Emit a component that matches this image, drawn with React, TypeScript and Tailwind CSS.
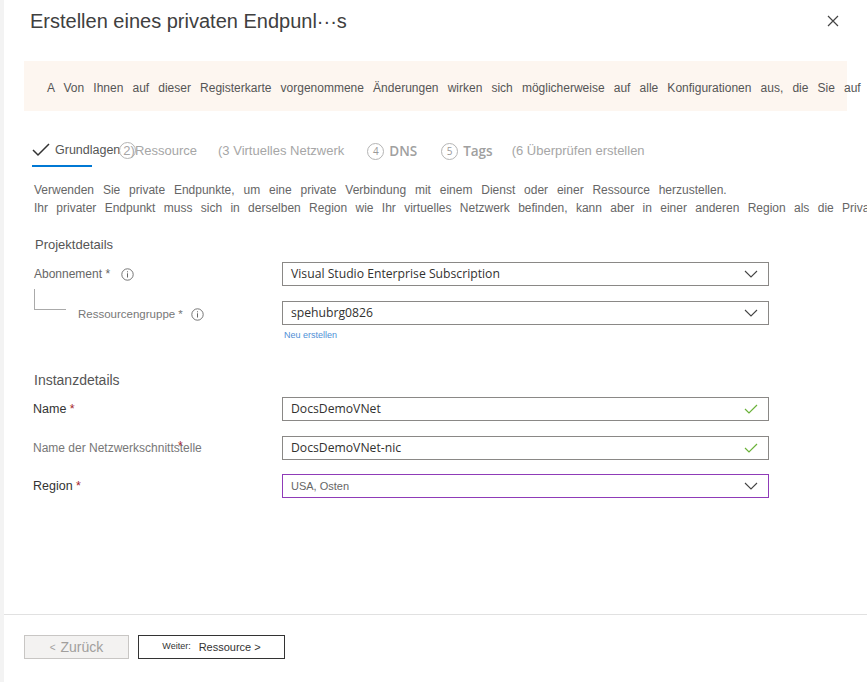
import React from "react";

const Chevron = () => (
  <svg width="14" height="8" viewBox="0 0 14 8" fill="none" className="shrink-0">
    <path d="M1 1l6 6 6-6" stroke="#444" strokeWidth="1.1" />
  </svg>
);

const Check = () => (
  <svg width="14" height="10" viewBox="0 0 14 10" fill="none" className="shrink-0">
    <path d="M1 5l4 4 8-8" stroke="#6bb23a" strokeWidth="1.2" />
  </svg>
);

const Info = () => (
  <svg width="13" height="13" viewBox="0 0 13 13" fill="none" className="shrink-0">
    <circle cx="6.5" cy="6.5" r="5.7" stroke="#666" strokeWidth="0.9" />
    <rect x="6" y="5.3" width="1" height="4.2" fill="#666" />
    <rect x="6" y="3.3" width="1" height="1" fill="#666" />
  </svg>
);

const Circle = ({ n }: { n: string }) => (
  <span className="inline-flex h-[17px] w-[17px] shrink-0 items-center justify-center rounded-full border border-[#b4b4b4] text-[10px] leading-none text-[#999]">
    {n}
  </span>
);

const Field = ({
  children,
  border = "border-[#8a8886]",
}: {
  children: React.ReactNode;
  border?: string;
}) => (
  <div className={`flex h-[24px] w-[487px] items-center justify-between border ${border} pl-[8px] pr-[10px]`}>
    {children}
  </div>
);

export default function App() {
  const sans = { fontFamily: '"Liberation Sans", Arial, sans-serif' };
  const seg = { fontFamily: '"Open Sans", "Noto Sans", sans-serif' };
  return (
    <div className="flex h-[682px] w-[867px] overflow-hidden bg-white" style={sans}>
      <div className="w-[4px] shrink-0 bg-[#f3f3f3]" />
      <div className="flex min-w-0 flex-1 flex-col">
        {/* header */}
        <div className="flex h-[42px] items-center justify-between pl-[26px] pr-[28px]">
          <h1 className="text-[20px] leading-none text-[#404040]">Erstellen eines privaten Endpunl···s</h1>
          <svg width="12" height="12" viewBox="0 0 12 12" fill="none">
            <path d="M1 1l10 10M11 1L1 11" stroke="#444" strokeWidth="1.2" />
          </svg>
        </div>

        {/* banner */}
        <div className="ml-[20px] mt-[19px] flex h-[50px] w-[823px] items-center overflow-visible bg-[#fdf6f0] pl-[23px] pt-[3px]">
          <p className="whitespace-nowrap text-[12px] text-[#555] [word-spacing:5.8px]">
            A Von Ihnen auf dieser Registerkarte vorgenommene Änderungen wirken sich möglicherweise auf alle Konfigurationen aus, die Sie auf
          </p>
        </div>

        {/* tabs */}
        <div className="mt-[30px] flex h-[25px] items-start pl-[28px] text-[13px] text-[#a6a6a6]">
          <div className="flex flex-col">
            <div className="flex items-center">
              <svg width="18" height="14" viewBox="0 0 18 14" fill="none" className="mr-[5px]">
                <path d="M1 7l5 5L17 1" stroke="#333" strokeWidth="1.5" />
              </svg>
              <span className="text-[12.5px] text-[#555]">Grundlagen</span>
            </div>
            <div className="mt-[5px] h-[2px] w-[60px] bg-[#0078d4]" />
          </div>
          <div className="-ml-[1px] flex items-center">
            <Circle n="" />
            <span className="-ml-[13px]">2)Ressource</span>
          </div>
          <span className="ml-[21px]">(3 Virtuelles Netzwerk</span>
          <div className="ml-[23px] flex items-center gap-[5px]" style={seg}>
            <Circle n="4" />
            <span className="text-[13.5px] font-semibold text-[#a0a0a0]">DNS</span>
          </div>
          <div className="ml-[24px] flex items-center gap-[5px]" style={seg}>
            <Circle n="5" />
            <span className="text-[13.5px] font-semibold text-[#a0a0a0]">Tags</span>
          </div>
          <span className="ml-[19px]">(6 Überprüfen erstellen</span>
        </div>

        {/* description */}
        <div className="mt-[15px] whitespace-nowrap pl-[30px] text-[12px] leading-[18px] text-[#666]">
          <p className="[word-spacing:5.5px]">Verwenden Sie private Endpunkte, um eine private Verbindung mit einem Dienst oder einer Ressource herzustellen.</p>
          <p className="[word-spacing:5px]">Ihr privater Endpunkt muss sich in derselben Region wie Ihr virtuelles Netzwerk befinden, kann aber in einer anderen Region als die Private</p>
        </div>

        {/* Projektdetails */}
        <div className="mt-[20px] pl-[31px] text-[13px] leading-[16px] text-[#555]">Projektdetails</div>

        <div className="mt-[9px] flex items-center pl-[30px]">
          <div className="flex w-[248px] items-center gap-[11px] text-[12px] text-[#666]">
            <span>Abonnement *</span>
            <Info />
          </div>
          <Field>
            <span className="text-[12.2px] text-[#323130]" style={seg}>Visual Studio Enterprise Subscription</span>
            <Chevron />
          </Field>
        </div>

        <div className="mt-[15px] flex items-start pl-[30px]">
          <div className="flex w-[248px]">
            <div className="-mt-[12px] h-[21px] w-[32px] border-b border-l border-[#aaa]" />
            <div className="ml-[12px] mt-[5px] flex items-center gap-[8px] text-[11.5px] text-[#777]">
              <span>Ressourcengruppe *</span>
              <Info />
            </div>
          </div>
          <div className="flex flex-col">
            <Field>
              <span className="text-[12.2px] text-[#323130]" style={seg}>spehubrg0826</span>
              <Chevron />
            </Field>
            <span className="mt-[3px] pl-[2px] text-[9px] leading-[14px] text-[#4f8fd6]">Neu erstellen</span>
          </div>
        </div>

        {/* Instanzdetails */}
        <div className="mt-[30px] pl-[30px] text-[14px] leading-[16px] text-[#555]">Instanzdetails</div>

        <div className="mt-[9px] flex items-center pl-[29px]">
          <div className="w-[249px] text-[12.5px] text-[#333]">
            Name <span className="text-[#a4262c]">*</span>
          </div>
          <Field>
            <span className="text-[12.2px] text-[#323130]" style={seg}>DocsDemoVNet</span>
            <Check />
          </Field>
        </div>

        <div className="mt-[15px] flex items-center pl-[29px]">
          <div className="relative w-[249px] text-[12px] text-[#777]">
            Name der Netzwerkschnittstelle
            <span className="absolute left-[145px] top-[-2px] text-[#a4262c]">*</span>
          </div>
          <Field>
            <span className="text-[12.2px] text-[#323130]" style={seg}>DocsDemoVNet-nic</span>
            <Check />
          </Field>
        </div>

        <div className="mt-[14px] flex items-center pl-[29px]">
          <div className="w-[249px] text-[12.5px] text-[#333]">
            Region <span className="text-[#a4262c]">*</span>
          </div>
          <Field border="border-[#8f3bb8]">
            <span className="text-[11px] text-[#666]">USA, Osten</span>
            <Chevron />
          </Field>
        </div>

        <div className="flex-1" />

        {/* footer */}
        <div className="h-[68px] border-t border-[#e1e1e1]">
          <div className="ml-[20px] mt-[20px] flex gap-[9px]">
            <div className="flex h-[24px] w-[105px] items-center justify-center border border-[#c8c6c4] bg-[#f3f2f1] text-[14px] text-[#a19f9d]">
              <span className="mr-[5px] text-[10px]">&lt;</span>Zurück
            </div>
            <div className="flex h-[24px] w-[147px] items-center justify-center border border-[#333] text-[#333]">
              <span className="text-[9px]">Weiter:</span>
              <span className="ml-[8px] text-[11px]">Ressource &gt;</span>
            </div>
          </div>
        </div>
      </div>
    </div>
  );
}
